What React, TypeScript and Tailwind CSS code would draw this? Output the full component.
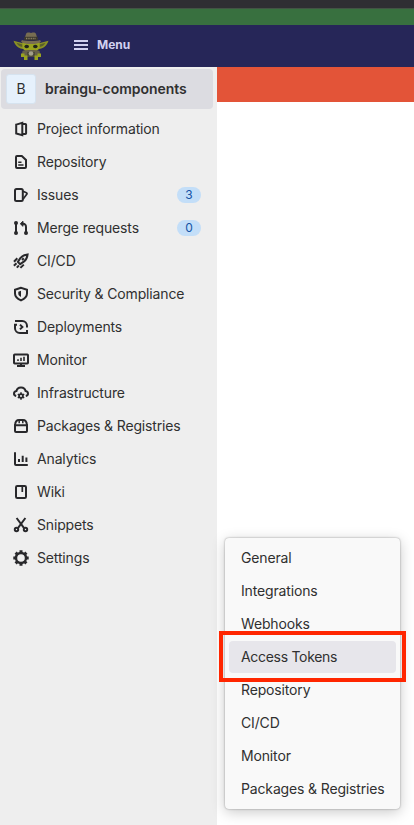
import type { ReactNode } from "react";

const icons: Record<string, ReactNode> = {
  project: (
    <>
      <path d="M3.2 3.6 9.300 1.900v12.200L3.200 12.400Z" />
      <path d="M9.300 3h3c.5 0 .8.300.8.800v8.400c0 .5-.3.800-.8.800h-3" />
    </>
  ),
  repository: (
    <>
      <path d="M4 2h4.800L13 6v7c0 .6-.4 1-1 1H4c-.6 0-1-.4-1-1V3c0-.6.400-1 1-1Z" />
      <path d="M5.200 8.200h3.300M5.200 11h5.300" strokeWidth="1.600" />
    </>
  ),
  issues: (
    <>
      <rect x="2" y="2" width="7.800" height="12" rx="1.500" />
      <path d="m10 4.200 3.400 1.500c.6.300.8.800.5 1.400L10 12.300" strokeWidth="1.700" />
    </>
  ),
  merge: (
    <>
      <path d="M3 3v10M13 12.800V7c0-2-1-3.200-3-3.200H8" />
      <path d="m10 1.300-2.700 2.500L10 6.300Z" fill="currentColor" strokeWidth="1" />
      <circle cx="3" cy="3" r="1" fill="currentColor" />
      <circle cx="3" cy="13" r="1" fill="currentColor" />
      <circle cx="13" cy="13" r="1" fill="currentColor" />
    </>
  ),
  rocket: (
    <>
      <path d="M14.600 1.400c-3.300.300-5.500 1.500-7.300 3.800L4.900 8.900l2.200 2.200 3.700-2.400c2.300-1.800 3.500-4 3.800-7.300Z" />
      <path d="m9 7 1.800-1.800M4.300 5.300 1 8.700M10.800 11.600l-3.400 3.300M3.500 10.200.9 12.800M5.900 12.500l-2.100 2.100" />
    </>
  ),
  shield: (
    <>
      <path d="M8 1.800 2 3.700v3.800c0 3.300 2.500 5.300 6 6.900 3.500-1.600 6-3.600 6-6.900V3.700Z" />
      <path d="M8 4.800 5.300 5.700v2c0 1.400 1 2.400 2.700 3.300Z" fill="currentColor" stroke="none" />
    </>
  ),
  deployments: (
    <>
      <path d="M2 2h7.200A4.800 4.800 0 0 1 14 6.800V8.500M14.500 14H6.800A4.800 4.800 0 0 1 2 9.200V5.500" />
      <path d="M1 5.700h3M10.500 14H14v-3M7 5.600 9.400 8 7 10.400" />
    </>
  ),
  monitor: (
    <>
      <rect x="1" y="2.600" width="14" height="8.800" rx=".7" />
      <path d="M8 11.500v2.600M4 14h8" />
      <path d="M5 9V7.200M8 9V5.800M11 9V4.700" strokeWidth="1.600" />
    </>
  ),
  infrastructure: (
    <>
      <path d="M3.200 11C1.900 10.700 1 9.900 1 8.700c0-1.500 1-2.400 2.400-2.600A4.600 4.600 0 0 1 8 2.400a4.600 4.600 0 0 1 4.600 3.700C14 6.300 15 7.200 15 8.700c0 1.200-.9 2-2.200 2.300" />
      <circle cx="8" cy="11" r="1.900" strokeWidth="1.700" />
      <path
        d="M8 7.300v1.600M8 13.100v1.600M4.800 9.200l1.400.8M9.800 12l1.400.8M4.800 12.800l1.400-.8M9.800 10l1.400-.8"
        strokeWidth="1.500"
      />
    </>
  ),
  packages: (
    <>
      <path d="M2 7.200h12V13c0 .6-.4 1-1 1H3c-.6 0-1-.4-1-1Z" />
      <path d="M2.100 7C2.300 4 3.800 2 6 2h4c2.200 0 3.700 2 3.900 5" />
      <path d="M6.200 2.500v2.700M9.800 2.500v2.700" strokeWidth="1.500" />
    </>
  ),
  analytics: <path d="M2 1.200V13c0 .6.400 1 1 1h11.800M6 11V8M9.700 11V4.800M13.400 11V6.500" />,
  wiki: (
    <>
      <rect x="3" y="2" width="10" height="12" rx="1.300" />
      <path d="M9.300 2v6" strokeWidth="1.700" />
    </>
  ),
  snippets: (
    <>
      <path d="m3.600 1 7.300 9.800M12.400 1l-7.300 9.800" />
      <circle cx="3.500" cy="12.500" r="1.700" />
      <circle cx="12.500" cy="12.500" r="1.700" />
    </>
  ),
  settings: (
    <>
      <circle cx="8" cy="8" r="5" strokeWidth="2.400" />
      <path
        d="M8 .3v2.500M8 13.200v2.500M.3 8h2.500M13.200 8h2.500M2.600 2.600l1.700 1.700M11.700 11.700l1.700 1.700M2.600 13.400l1.700-1.700M11.700 4.300l1.700-1.700"
        strokeWidth="3"
      />
    </>
  ),
};

const items: { icon: string; label: string; count?: number }[] = [
  { icon: "project", label: "Project information" },
  { icon: "repository", label: "Repository" },
  { icon: "issues", label: "Issues", count: 3 },
  { icon: "merge", label: "Merge requests", count: 0 },
  { icon: "rocket", label: "CI/CD" },
  { icon: "shield", label: "Security & Compliance" },
  { icon: "deployments", label: "Deployments" },
  { icon: "monitor", label: "Monitor" },
  { icon: "infrastructure", label: "Infrastructure" },
  { icon: "packages", label: "Packages & Registries" },
  { icon: "analytics", label: "Analytics" },
  { icon: "wiki", label: "Wiki" },
  { icon: "snippets", label: "Snippets" },
  { icon: "settings", label: "Settings" },
];

const submenu = [
  "General",
  "Integrations",
  "Webhooks",
  "Access Tokens",
  "Repository",
  "CI/CD",
  "Monitor",
  "Packages & Registries",
];

function Icon({ name }: { name: string }) {
  return (
    <svg viewBox="0 0 16 16" className="size-4 shrink-0" fill="none" stroke="#28282b" strokeWidth="2" color="#28282b">
      {icons[name]}
    </svg>
  );
}

function Logo() {
  return (
    <svg viewBox="0 0 36 30" className="h-[30px] w-9">
      <path d="M11 12.500.5 9.800C2 14.500 5.500 18 12 18.300Z" fill="#8a9125" />
      <path d="m25 12.500 10.500-2.700C34 14.500 30.500 18 24 18.300Z" fill="#8a9125" />
      <path d="m9.500 13.500-6-1.700c1.500 2.500 3 3.800 6 4.300ZM26.500 13.500l6-1.700c-1.500 2.500-3 3.800-6 4.300Z" fill="#5b602b" />
      <path d="M9.500 11h17v4.500c0 3.500-3.500 5.500-8.500 5.500s-8.500-2-8.500-5.500Z" fill="#99a31f" />
      <path d="M11.500 8 13 3c.5-1.500 2-1.800 3.500-1.500l1.500.5 1.500-.5C21 1.200 22.500 1.500 23 3l1.500 5Z" fill="#786d52" />
      <path d="M11.300 5.800h13.400v3.700H11.300Z" fill="#3b372d" />
      <path d="M13 7.500h10" stroke="#8d8264" strokeWidth="1.300" strokeDasharray="1 .7" />
      <path d="M9 9c2.500 1.300 15.500 1.300 18 0l1 1.500c-2 2-5.500 2.500-10 2.500S10 12.500 8 10.500Z" fill="#786d52" />
      <ellipse cx="13.700" cy="15.500" rx="2.300" ry="1.700" fill="#20251b" />
      <ellipse cx="22.300" cy="15.500" rx="2.300" ry="1.700" fill="#20251b" />
      <path d="M9.500 20C12 18.800 24 18.800 26.500 20l1 5.500h-19Z" fill="#66604a" />
      <path d="M14 21h8v5h-8Z" fill="#4d4c39" />
      <circle cx="18" cy="22.500" r="2.300" fill="#a39f8a" />
      <path d="M8 22.500h3.500v3.500H8ZM24.500 22.500H28v3.500h-3.500ZM11 24.500h3.500V29H11ZM21.500 24.500H25V29h-3.500Z" fill="#99a31f" />
    </svg>
  );
}

export default function App() {
  return (
    <div className="flex h-[825px] w-[414px] flex-col overflow-hidden bg-white font-['Inter',sans-serif] text-sm text-[#303030]">
      <div className="h-2 shrink-0 bg-[#2f2e33]" />
      <div className="h-[17px] shrink-0 border-t border-[#435345] bg-[#38703f]" />
      <header className="flex h-[42px] shrink-0 items-center bg-[#262658] pl-[13px] text-[#d1d1f0]">
        <Logo />
        <svg viewBox="0 0 14 12" className="mt-[-2px] ml-[25px] h-3 w-3.5" fill="currentColor">
          <path d="M0 1h14v2H0zM0 5h14v2H0zM0 9h14v2H0z" />
        </svg>
        <span className="mt-[-3px] ml-[9px] text-[12px] font-bold">Menu</span>
      </header>
      <div className="flex min-h-0 flex-1">
        <aside className="flex w-[217px] shrink-0 flex-col bg-[#eeeeee] pt-0.5">
          <div className="mr-1 mb-[3px] ml-px flex h-10 shrink-0 items-center rounded bg-[#dcdce1] pl-[5px]">
            <span className="flex size-[30px] items-center justify-center rounded-[3px] border border-[#d6e3ef] bg-[#e6f1fc] text-sm">
              B
            </span>
            <span className="ml-[9px] font-semibold tracking-[-0.03px]">braingu-components</span>
          </div>
          <nav>
            {items.map(({ icon, label, count }) => (
              <a key={label} className="flex h-[33px] items-center pr-4 pl-[13px]">
                <Icon name={icon} />
                <span className="ml-2 tracking-[-0.15px]">{label}</span>
                {count !== undefined && (
                  <span className="ml-auto flex h-4 w-6 items-center justify-center rounded-full bg-[#c3def8] text-[12px] text-[#1554a5]">
                    {count}
                  </span>
                )}
              </a>
            ))}
          </nav>
        </aside>
        <main className="flex-1">
          <div className="h-[35px] bg-[#e35438]" />
        </main>
      </div>
      <div className="absolute top-[538px] left-[225px] w-[175px] rounded bg-[#f9f9f9] px-1 py-[3px] shadow-[0_0_2px_rgba(0,0,0,0.4),0_3px_14px_rgba(0,0,0,0.22)]">
        {submenu.map((label) => (
          <div
            key={label}
            className={`my-px flex h-8 items-center rounded pl-3 whitespace-nowrap ${label === "Access Tokens" ? "bg-[#e7e6eb] tracking-[-0.3px]" : "tracking-[-0.15px]"}`}
          >
            {label}
          </div>
        ))}
      </div>
      <div className="absolute top-[631px] left-[219px] h-[51px] w-[187px] border-4 border-[#ff2600]" />
    </div>
  );
}
